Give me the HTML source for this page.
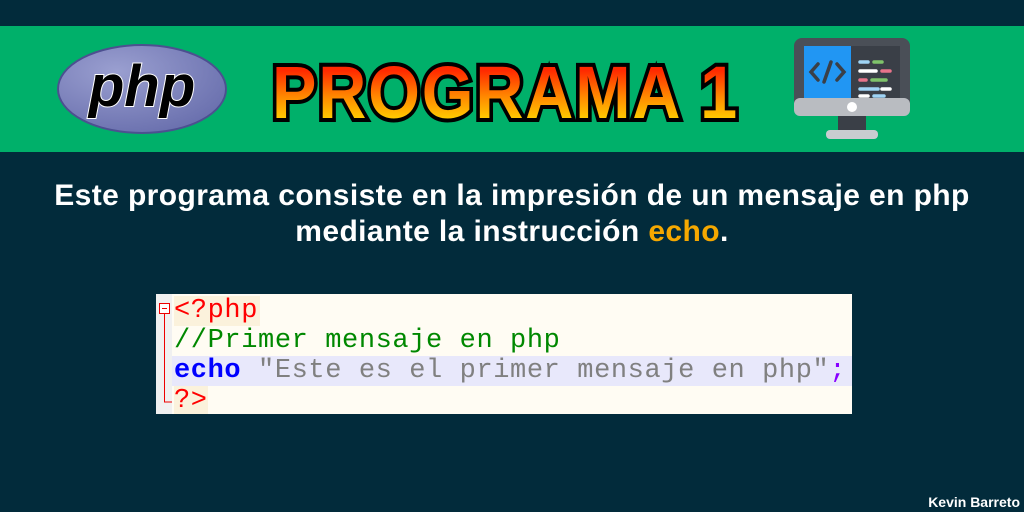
<!DOCTYPE html>
<html><head><meta charset="utf-8"><style>
*{margin:0;padding:0}
body{width:1024px;height:512px;background:#022b3b;position:relative;overflow:hidden;font-family:"Liberation Sans",sans-serif}
.band{position:absolute;left:0;top:26px;width:1024px;height:126px;background:#00b06a}
.title{position:absolute;left:272px;top:53px;font-weight:bold;font-size:74px;letter-spacing:2px;line-height:80px;white-space:nowrap;transform:scaleX(0.9);transform-origin:left}
.t1{color:#000;-webkit-text-stroke:8px #000}
.t2{background:linear-gradient(#ff2a00 22%,#ff8a00 55%,#ffd200 85%);-webkit-background-clip:text;background-clip:text;color:transparent}
.desc{position:absolute;left:0;width:1024px;text-align:center;color:#fff;font-weight:bold;font-size:30px;letter-spacing:0.4px;line-height:36px;top:178px}
.desc span{color:#f5a800}
.code{position:absolute;left:156px;top:294px;width:696px;height:120px;background:#fffcf3;font-family:"Liberation Mono",monospace;font-size:27px}
.gut{position:absolute;left:0;top:0;width:16px;height:120px;background:#f0f0f0}
.ln{position:absolute;left:18px;height:30px;line-height:30px;white-space:pre;letter-spacing:0.6px}
.hl{position:absolute;left:16px;top:62px;width:680px;height:30px;background:#e8e8fb}
.k{position:absolute;right:4px;bottom:2px;color:#fff;font-weight:bold;font-size:14px}
</style></head><body>
<div class="band"></div>
<svg style="position:absolute;left:56px;top:44px" width="172" height="90" viewBox="0 0 172 90">
<defs><radialGradient id="g" cx="35%" cy="30%" r="75%"><stop offset="0" stop-color="#9a9fd0"/><stop offset="1" stop-color="#6a70ae"/></radialGradient></defs>
<ellipse cx="86" cy="45" rx="84" ry="44" fill="url(#g)" stroke="#4c5090" stroke-width="2"/>
<text x="86" y="62" text-anchor="middle" font-family="Liberation Sans" font-weight="bold" font-style="italic" font-size="58" fill="#000" stroke="#fff" stroke-width="2" paint-order="stroke">php</text>
</svg>
<div class="title t1">PROGRAMA 1</div>
<div class="title t2">PROGRAMA 1</div>
<svg style="position:absolute;left:794px;top:38px" width="116" height="102" viewBox="0 0 116 102">
<rect x="0" y="0" width="116" height="78" rx="8" fill="#4a4f57"/>
<rect x="0" y="60" width="116" height="18" rx="6" fill="#b9bcc1"/>
<rect x="10" y="8" width="47" height="52" fill="#2196f3"/>
<rect x="57" y="8" width="49" height="52" fill="#3a3f47"/>
<path d="M24 26 L17 34 L24 42 M43 26 L50 34 L43 42 M37 24 L30 44" stroke="#3a3f47" stroke-width="3.5" fill="none" stroke-linecap="round"/>
<g stroke-width="3.5" stroke-linecap="round"><path d="M66 24h8" stroke="#9fd4f5"/><path d="M80 24h8" stroke="#7fc36a"/><path d="M66 33h16" stroke="#fff"/><path d="M88 33h8" stroke="#e8748a"/><path d="M66 42h6" stroke="#e8748a"/><path d="M78 42h14" stroke="#7fc36a"/><path d="M66 51h18" stroke="#9fd4f5"/><path d="M88 51h8" stroke="#fff"/><path d="M66 58h8" stroke="#fff"/><path d="M80 58h10" stroke="#9fd4f5"/></g>
<circle cx="58" cy="69" r="5" fill="#fff"/>
<rect x="44" y="78" width="28" height="14" fill="#3a3f47"/>
<rect x="32" y="92" width="52" height="9" rx="4" fill="#c9ccd0"/>
</svg>
<div class="desc">Este programa consiste en la impresión de un mensaje en php<br>mediante la instrucción <span>echo</span>.</div>
<div class="code">
<div class="gut"></div>
<div class="hl"></div>
<div style="position:absolute;left:18px;top:2px;width:86px;height:30px;background:#fbf2dc"></div>
<div style="position:absolute;left:18px;top:92px;width:34px;height:28px;background:#fbf2dc"></div>
<svg style="position:absolute;left:2px;top:8px" width="16" height="106"><rect x="1.5" y="1.5" width="10" height="10" fill="#fff" stroke="#e00"/><path d="M4 6.5h5M6.5 12V100H14" stroke="#e00" fill="none"/></svg>
<div class="ln" style="top:2px;color:#f00">&lt;?php</div>
<div class="ln" style="top:32px;color:#080">//Primer mensaje en php</div>
<div class="ln" style="top:62px;color:#808080"><b style="color:#00f">echo</b> "Este es el primer mensaje en php"<span style="color:#80f">;</span></div>
<div class="ln" style="top:92px;color:#f00">?&gt;</div>
</div>
<div class="k">Kevin Barreto</div>
</body></html>
